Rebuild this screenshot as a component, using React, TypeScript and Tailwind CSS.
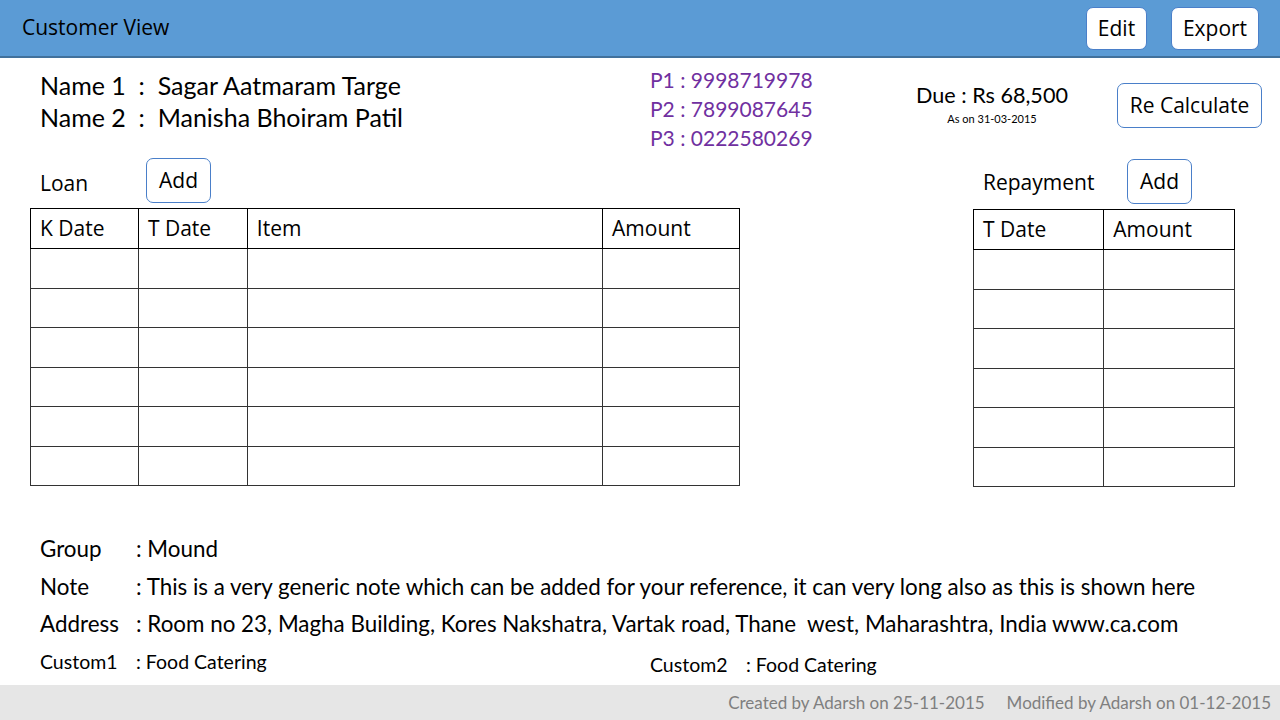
import React from 'react';

const cal = { fontFamily: 'Lato, "Open Sans", sans-serif' };
const seg = { fontFamily: '"Open Sans", "Noto Sans", sans-serif' };

function Btn({ label, className = '' }: { label: string; className?: string }) {
  return (
    <button
      style={seg}
      className={`bg-white border border-[#4a7fc9] rounded-[7px] text-[21px] text-black leading-none ${className}`}
    >
      {label}
    </button>
  );
}

function Grid({ cols, head, rows }: { cols: number[]; head: string[]; rows: number }) {
  return (
    <table className="border-collapse border border-black table-fixed" style={seg}>
      <colgroup>
        {cols.map((w, i) => (
          <col key={i} style={{ width: w }} />
        ))}
      </colgroup>
      <tbody>
        <tr className="h-[40px]">
          {head.map((h) => (
            <td key={h} className="border border-black px-[9px] text-[21px] text-black align-middle">
              {h}
            </td>
          ))}
        </tr>
        {Array.from({ length: rows }).map((_, r) => (
          <tr key={r} className="h-[39.5px]">
            {head.map((h) => (
              <td key={h} className="border border-[#333]" />
            ))}
          </tr>
        ))}
      </tbody>
    </table>
  );
}

export default function App() {
  return (
    <div className="w-[1280px] h-[720px] bg-white flex flex-col overflow-hidden">
      <header className="h-[58px] shrink-0 bg-[#5b9bd5] border-b-2 border-[#41719c] flex items-center pl-[22px] pr-[21px]">
        <span style={seg} className="text-[21px] text-black">Customer View</span>
        <div className="ml-auto flex gap-[24px]">
          <Btn label="Edit" className="w-[61px] h-[43px] border-[#3c6ea8]" />
          <Btn label="Export" className="w-[88px] h-[43px] border-[#3c6ea8]" />
        </div>
      </header>

      <section className="flex h-[98px] shrink-0">
        <div style={cal} className="w-[650px] pl-[40px] pt-[11px] text-[25px] leading-[32px] text-black">
          <div>Name 1&nbsp;&nbsp;:&nbsp;&nbsp;Sagar Aatmaram Targe</div>
          <div>Name 2&nbsp;&nbsp;:&nbsp;&nbsp;Manisha Bhoiram Patil</div>
        </div>
        <div style={cal} className="w-[266px] pt-[7px] text-[21px] leading-[29px] text-[#7030a0]">
          <div>P1 : 9998719978</div>
          <div>P2 : 7899087645</div>
          <div>P3 : 0222580269</div>
        </div>
        <div style={cal} className="w-[152px] pt-[24px] flex flex-col items-center text-black">
          <div className="text-[21.6px] leading-[27px]">Due : Rs 68,500</div>
          <div className="text-[11px] leading-[20px]">As on 31-03-2015</div>
        </div>
        <div className="ml-auto mr-[18px] pt-[25px]">
          <Btn label="Re Calculate" className="w-[145px] h-[45px]" />
        </div>
      </section>

      <section className="flex shrink-0">
        <div className="ml-[30px] w-[710px]">
          <div className="flex items-center h-[52px]">
            <span style={seg} className="ml-[10px] w-[106px] text-[21px] pt-[4px] text-black">Loan</span>
            <Btn label="Add" className="w-[65px] h-[45px] -mt-[4px]" />
          </div>
          <Grid cols={[108, 109, 356, 137]} head={['K Date', 'T Date', 'Item', 'Amount']} rows={6} />
        </div>
        <div className="ml-[233px] w-[262px]">
          <div className="flex items-center h-[53px]">
            <span style={seg} className="ml-[10px] w-[144px] text-[21px] text-black">Repayment</span>
            <Btn label="Add" className="w-[65px] h-[45px] -mt-[2px]" />
          </div>
          <Grid cols={[131, 131]} head={['T Date', 'Amount']} rows={6} />
        </div>
      </section>

      <section style={cal} className="pl-[40px] pt-[43px] text-black">
        <div className="flex text-[22.4px] leading-[38px]">
          <span className="w-[96px]">Group</span>
          <span>: Mound</span>
        </div>
        <div className="flex text-[22.4px] leading-[38px]">
          <span className="w-[96px]">Note</span>
          <span>: This is a very generic note which can be added for your reference, it can very long also as this is shown here</span>
        </div>
        <div className="flex text-[22.4px] leading-[36px]">
          <span className="w-[96px]">Address</span>
          <span>: Room no 23, Magha Building, Kores Nakshatra, Vartak road, Thane&nbsp; west, Maharashtra, India www.ca.com</span>
        </div>
        <div className="flex text-[19.5px] leading-[40px]">
          <span className="w-[96px]">Custom1</span>
          <span className="w-[514px]">: Food Catering</span>
          <span className="w-[96px] pt-[3px]">Custom2</span>
          <span className="pt-[3px]">: Food Catering</span>
        </div>
      </section>

      <footer
        style={cal}
        className="mt-auto h-[36px] shrink-0 bg-[#e6e6e6] flex items-center justify-end gap-[22px] pr-[9px] text-[17px] text-[#7f7f7f]"
      >
        <span>Created by Adarsh on 25-11-2015</span>
        <span>Modified by Adarsh on 01-12-2015</span>
      </footer>
    </div>
  );
}
